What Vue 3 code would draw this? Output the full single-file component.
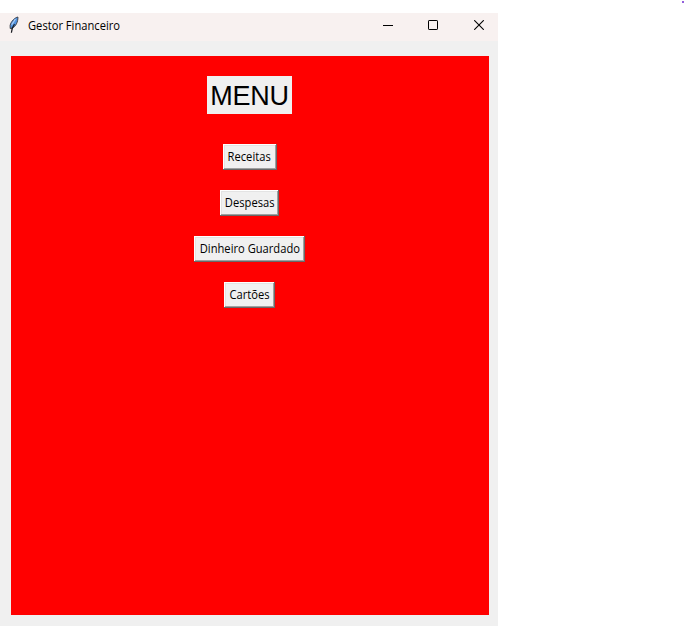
<script setup>
const buttons = [
  { label: 'Receitas', kind: 'income' },
  { label: 'Despesas', kind: 'expenses' },
  { label: 'Dinheiro Guardado', kind: 'savings' },
  { label: 'Cartões', kind: 'cards' },
]
</script>

<template>
  <main class="desktop">
    <section class="window">
      <header class="titlebar">
        <svg class="feather" width="12" height="18" viewBox="0 0 12 18">
          <path d="M9.900 1C7 1.500 2.800 5.500 2.100 9.500L2.200 12.500l2.300-.3C7.500 10.500 10.200 6 9.900 1Z" fill="#5294e2" stroke="#33363d" stroke-width=".9" />
          <path d="M7.500 3 3.700 8.800" stroke="#b4d2f3" stroke-width="1.100" />
          <path d="M6.500 8.200C5 10 3.600 11.500 3.400 16.800" fill="none" stroke="#17191f" stroke-width="1.200" />
        </svg>
        <span class="title">Gestor Financeiro</span>
        <div class="controls">
          <svg width="10" height="10" viewBox="0 0 10 10" shape-rendering="crispEdges"><path d="M0 5.500H10" stroke="#000" /></svg>
          <svg width="10" height="10" viewBox="0 0 10 10"><rect x=".5" y=".5" width="9" height="9" rx=".6" fill="none" stroke="#000" /></svg>
          <svg width="10" height="10" viewBox="0 0 10 10"><path d="M.2 .2 9.800 9.800M9.800 .2 .2 9.800" stroke="#000" stroke-width="1.100" /></svg>
        </div>
      </header>
      <div class="client">
        <div class="panel">
          <h1 class="heading">MENU</h1>
          <button v-for="b in buttons" :key="b.kind" :class="['btn', b.kind]"><span>{{ b.label }}</span></button>
        </div>
      </div>
    </section>
    <i class="speck"></i>
  </main>
</template>

<style>
body { background: #fff; }
</style>

<style scoped>
.desktop {
  box-sizing: border-box;
  position: relative;
  width: 685px;
  height: 626px;
  padding-top: 13px;
  overflow: hidden;
  background: #fff;
  color: #000;
  font-family: "Open Sans", "Noto Sans", sans-serif;
  font-size: 12px;
}
.window { display: flex; flex-direction: column; width: 498px; height: 613px; background: #f0f0f0; }
.titlebar {
  display: flex;
  box-sizing: border-box;
  height: 28px;
  padding: 0 14px 0 8px;
  background: #f8f1f0;
}
.feather { margin-top: 3px; }
.title {
  margin-left: 8px;
  line-height: 26px;
  white-space: nowrap;
  transform: scaleX(.93);
  transform-origin: left;
}
.controls { display: flex; gap: 35px; margin: 7px 0 0 auto; height: 10px; }
.controls svg:last-child { margin-left: 1px; }
.client { flex: 1; padding: 15px 9px 11px 11px; display: flex; }
.panel {
  flex: 1;
  display: flex;
  flex-direction: column;
  align-items: center;
  padding-top: 20px;
  background: #f00;
}
.heading {
  width: 85px;
  height: 38px;
  margin: 0 1px 30px 0;
  background: #f0f0f0;
  font: 400 27px/41px "Liberation Sans", Arial, sans-serif;
  letter-spacing: -0.2px;
  text-align: center;
}
.btn {
  box-sizing: border-box;
  display: flex;
  justify-content: center;
  height: 26px;
  margin: 0 1px 20px 0;
  padding: 0;
  border: 0;
  background: #f0f0f0;
  box-shadow: inset -1px -1px #696969, inset 1px 1px #fff, inset -2px -2px #a0a0a0, inset 2px 2px #e3e3e3;
  color: #000;
  font: inherit;
  line-height: 26px;
  white-space: nowrap;
}
.btn span { transform: scaleX(.93); }
.income { width: 54px; }
.expenses { width: 59px; }
.savings { width: 111px; }
.cards { width: 51px; }
.speck { position: absolute; top: 1px; left: 682px; width: 2px; height: 2px; background: #9260dc; }
</style>
